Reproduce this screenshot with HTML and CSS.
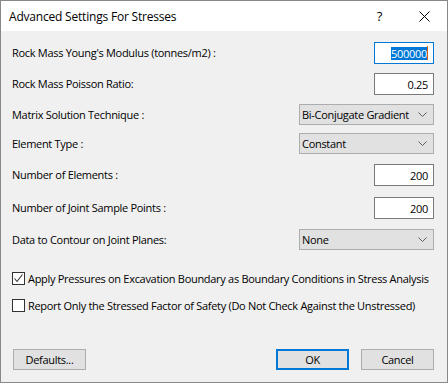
FILE: index.html
```html
<!DOCTYPE html>
<html>
<head>
<meta charset="utf-8">
<link rel="stylesheet" href="styles.css">
</head>
<body>
<div class="window">
  <div class="titlebar">
    <span class="title">Advanced Settings For Stresses</span>
    <span class="help">?</span>
    <svg class="close" width="11" height="11" viewBox="0 0 11 11"><path d="M0.5 0.5 L10.5 10.5 M10.5 0.5 L0.5 10.5" stroke="#000" stroke-width="1" fill="none"/></svg>
  </div>
  <div class="content">
    <div class="form">
      <div class="row">
        <span class="label">Rock Mass Young's Modulus (tonnes/m2) :</span>
        <div class="input focused"><span class="sel">500000</span><span class="caret"></span></div>
      </div>
      <div class="row">
        <span class="label">Rock Mass Poisson Ratio:</span>
        <div class="input">0.25</div>
      </div>
      <div class="row">
        <span class="label">Matrix Solution Technique :</span>
        <div class="select"><span>Bi-Conjugate Gradient</span><svg class="chev" width="9" height="5" viewBox="0 0 9 5"><path d="M0.5 0.5 L4.5 4.5 L8.5 0.5" stroke="#606060" fill="none"/></svg></div>
      </div>
      <div class="row">
        <span class="label">Element Type :</span>
        <div class="select"><span>Constant</span><svg class="chev" width="9" height="5" viewBox="0 0 9 5"><path d="M0.5 0.5 L4.5 4.5 L8.5 0.5" stroke="#606060" fill="none"/></svg></div>
      </div>
      <div class="row">
        <span class="label">Number of Elements :</span>
        <div class="input">200</div>
      </div>
      <div class="row">
        <span class="label">Number of Joint Sample Points :</span>
        <div class="input">200</div>
      </div>
      <div class="row">
        <span class="label">Data to Contour on Joint Planes:</span>
        <div class="select"><span>None</span><svg class="chev" width="9" height="5" viewBox="0 0 9 5"><path d="M0.5 0.5 L4.5 4.5 L8.5 0.5" stroke="#606060" fill="none"/></svg></div>
      </div>
    </div>
    <div class="checks">
      <div class="check">
        <span class="box"><svg width="11" height="11" viewBox="0 0 11 11"><path d="M1.5 5.5 L4 8.5 L9.5 1.5" stroke="#333" stroke-width="1.1" fill="none"/></svg></span>
        <span class="ctext">Apply Pressures on Excavation Boundary as Boundary Conditions in Stress Analysis</span>
      </div>
      <div class="check">
        <span class="box"></span>
        <span class="ctext">Report Only the Stressed Factor of Safety (Do Not Check Against the Unstressed)</span>
      </div>
    </div>
    <div class="buttons">
      <div class="btn">Defaults...</div>
      <div class="spacer"></div>
      <div class="btn default">OK</div>
      <div class="btn">Cancel</div>
    </div>
  </div>
</div>
</body>
</html>
```
FILE: styles.css
```css
html, body {
  margin: 0;
  padding: 0;
  background: #f0f0f0;
}
body {
  font-family: "Open Sans", "Noto Sans", sans-serif;
  font-size: 11px;
  letter-spacing: -0.3px;
  color: #000;
  white-space: nowrap;
}
.window {
  width: 448px;
  height: 383px;
  box-sizing: border-box;
  border: 1px solid #888;
  display: flex;
  flex-direction: column;
  background: #f0f0f0;
  overflow: hidden;
}
.titlebar {
  height: 30px;
  background: #fff;
  display: flex;
  align-items: center;
  padding-left: 8px;
  flex-shrink: 0;
}
.title {
  font-size: 12px;
  letter-spacing: -0.2px;
  flex: 1;
  padding-top: 1px;
}
.help {
  font-size: 13px;
  margin-right: 37px;
}
.close {
  margin-right: 17px;
}
.content {
  flex: 1;
  display: flex;
  flex-direction: column;
  padding: 11px 13px 0 11px;
}
.form {
  display: grid;
  grid-template-rows: 31px 31px 29px 31px 33px 32px 21px;
}
.row {
  display: flex;
  justify-content: space-between;
  align-items: flex-start;
}
.label {
  line-height: 22px;
}
.input {
  width: 60px;
  height: 22px;
  box-sizing: border-box;
  border: 1px solid #7a7a7a;
  background: #fff;
  padding-right: 5px;
  display: flex;
  justify-content: flex-end;
  align-items: center;
}
.input.focused {
  border-color: #0078d7;
}
.sel {
  background: #0078d7;
  color: #fff;
  line-height: 13px;
}
.caret {
  width: 1px;
  height: 14px;
  background: #d06010;
}
.select {
  width: 135px;
  height: 21px;
  box-sizing: border-box;
  border: 1px solid #adadad;
  background: #e1e1e1;
  display: flex;
  align-items: center;
  justify-content: space-between;
  padding: 0 6px 0 2px;
}
.chev {
  display: block;
}
.checks {
  margin-top: 22px;
  display: flex;
  flex-direction: column;
  gap: 14px;
}
.check {
  display: flex;
  align-items: center;
  gap: 3px;
  height: 13px;
}
.box {
  width: 13px;
  height: 13px;
  box-sizing: border-box;
  border: 1px solid #333;
  background: #fff;
  display: flex;
  align-items: center;
  justify-content: center;
  flex-shrink: 0;
}
.box svg {
  display: block;
}
.buttons {
  margin-top: 37px;
  display: flex;
  gap: 12px;
  padding-left: 1px;
}
.spacer {
  flex: 1;
}
.btn {
  width: 73px;
  height: 21px;
  box-sizing: border-box;
  border: 1px solid #adadad;
  background: #e1e1e1;
  display: flex;
  align-items: center;
  justify-content: center;
}
.btn.default {
  border: 2px solid #0078d7;
}
```
